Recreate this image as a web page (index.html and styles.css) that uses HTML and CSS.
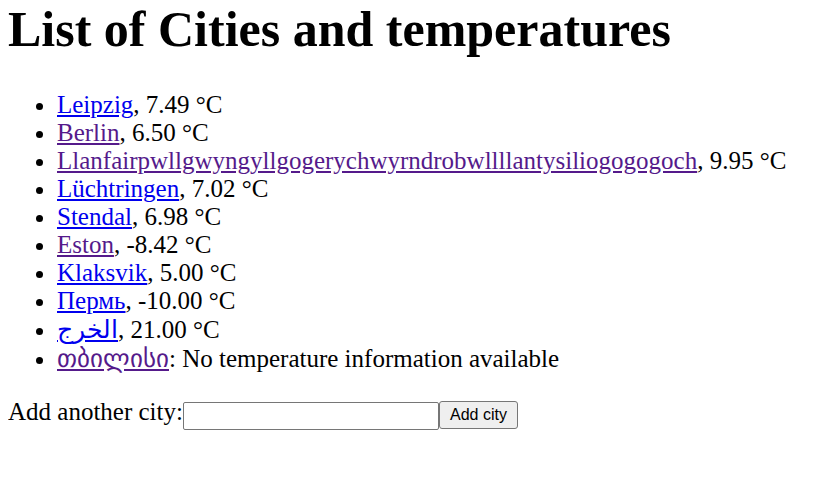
FILE: index.html
```html
<!DOCTYPE html>
<html>
<head>
<meta charset="utf-8">
<title>List of Cities and temperatures</title>
<link rel="stylesheet" href="styles.css">
</head>
<body>
<h1 class="title">List of Cities and temperatures</h1>
<ul class="cities">
  <li><a class="link" href="#leipzig">Leipzig</a>, 7.49 °C</li>
  <li><a class="link visited" href="#berlin">Berlin</a>, 6.50 °C</li>
  <li><a class="link visited" href="#llan">Llanfairpwllgwyngyllgogerychwyrndrobwllllantysiliogogogoch</a>, 9.95 °C</li>
  <li><a class="link" href="#luechtringen">Lüchtringen</a>, 7.02 °C</li>
  <li><a class="link" href="#stendal">Stendal</a>, 6.98 °C</li>
  <li><a class="link visited" href="#eston">Eston</a>, -8.42 °C</li>
  <li><a class="link" href="#klaksvik">Klaksvik</a>, 5.00 °C</li>
  <li><a class="link" href="#perm">Пермь</a>, -10.00 °C</li>
  <li><a class="link" href="#alkharj">الخرج</a>, 21.00 °C</li>
  <li><a class="link visited" href="#tbilisi">თბილისი</a>: No temperature information available</li>
</ul>
<form class="add-form">
  <label class="add-label" for="city">Add another city:</label><input class="city-input" id="city" type="text"><button class="add-button" type="button">Add city</button>
</form>
</body>
</html>
```
FILE: styles.css
```css
html, body {
  background: #ffffff;
}
body {
  margin: 0 8px;
  font-family: "Liberation Serif", serif;
  font-size: 25px;
  color: #000000;
}
.title {
  font-size: 50px;
  font-weight: bold;
  margin: 0 0 33px;
}
.cities {
  margin: 0 0 25px;
  padding-left: 49px;
}
.link {
  color: #0000ee;
  text-decoration: underline;
  unicode-bidi: isolate;
}
.link.visited {
  color: #551a8b;
}
.add-form {
  margin: 0;
}
.city-input {
  box-sizing: border-box;
  width: 256px;
  height: 28px;
  margin: 0;
  padding: 1px 2px;
  border: 1px solid #767676;
  border-radius: 2px;
  font-family: "Liberation Sans", sans-serif;
  font-size: 13.33px;
  background: #ffffff;
  vertical-align: baseline;
}
.add-button {
  box-sizing: border-box;
  width: 79px;
  height: 28px;
  margin: 0;
  padding: 0 6px;
  border: 1px solid #767676;
  border-radius: 3px;
  background: #efefef;
  color: #000000;
  font-family: "Liberation Sans", sans-serif;
  font-size: 16px;
  vertical-align: baseline;
}
```
